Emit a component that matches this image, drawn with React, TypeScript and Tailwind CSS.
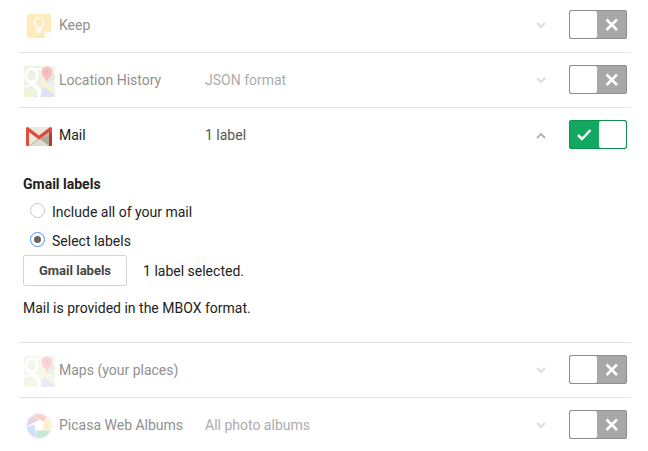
import { ReactNode, useState } from 'react'

function KeepIcon() {
  return (
    <svg width="24" height="24" viewBox="0 0 24 24">
      <path d="M2 0h20a2 2 0 0 1 2 2v15l-7 7H2a2 2 0 0 1-2-2V2a2 2 0 0 1 2-2z" fill="#fbbf24" />
      <path d="M17 24v-7h7z" fill="#fdeeb0" />
      <path d="M17 17v7h-7z" fill="#eaa91c" opacity=".6" />
      <path
        d="M10 14c0-2-2.500-2.800-2.500-5.500a4.600 4.600 0 0 1 9.200 0c0 2.700-2.500 3.500-2.500 5.500zM9 16.300h6M10 18.300h4"
        fill="none"
        stroke="#fff"
        strokeWidth="1.400"
      />
    </svg>
  )
}

function MapsIcon() {
  return (
    <svg width="31" height="31" viewBox="0 0 31 31">
      <defs>
        <clipPath id="map">
          <rect width="31" height="31" rx="2" />
        </clipPath>
      </defs>
      <g clipPath="url(#map)">
        <path d="M0 0h31v31H0z" fill="#c3d8a6" />
        <path d="M16 0h15v17L16 11z" fill="#d0ddb8" />
        <path d="M10 31l11-10 10 6v4z" fill="#8fa0d8" />
        <path d="M17 12l14 8v6l-10-6-5 3z" fill="#cfcfd0" />
        <path d="M3 31l6-6M16 23l5-4 10 9M17 12l4 6" stroke="#f0dc50" strokeWidth="2.500" fill="none" />
        <g fill="none" stroke="#fff">
          <ellipse cx="7.500" cy="9.500" rx="5.800" ry="6.800" strokeWidth="3.200" />
          <path d="M8 3h9" strokeWidth="2.200" />
          <path d="M10 15c-3 3 0 4 3 6.500 3.500 3 2.500 6.500 1 9.500" strokeWidth="4" />
          <path d="M0 20.500c4 0 7-1 10-3" strokeWidth="2" />
        </g>
        <path d="M23 18l4-8 4-2v5z" fill="#666" opacity=".4" />
        <path d="M23 18c0-6-5.500-7-5.500-12a5.500 5.500 0 0 1 11 0c0 5-5.500 6-5.500 12z" fill="#e8302e" />
        <circle cx="23" cy="6" r="1.700" fill="#962020" />
      </g>
    </svg>
  )
}

function MailIcon() {
  return (
    <svg width="26" height="19" viewBox="0 0 26 19">
      <rect width="26" height="19" rx="1.500" fill="#ece9dc" />
      <path d="M13 11l10-7v15z" fill="#b9b6a8" />
      <path d="M3 19l10-8 10 8z" fill="#dfdccd" />
      <path d="M13 11l10 8V9z" fill="#aeab9d" />
      <path d="M3 19l10-7" fill="none" stroke="#b5b2a4" strokeWidth="1" />
      <path d="M0 1.500A1.500 1.500 0 0 1 2.500.4L13 8.500 23.500.4A1.500 1.500 0 0 1 26 1.500V19h-3V5l-10 7.500L3 5v14H1.500A1.500 1.500 0 0 1 0 17.500z" fill="#e04a3f" />
      <path d="M23 5l3 3v9.500a1.500 1.500 0 0 1-1.500 1.500H23z" fill="#b5382e" />
    </svg>
  )
}

function PicasaIcon() {
  return (
    <svg width="28" height="28" viewBox="0 0 28 28">
      <defs>
        <clipPath id="lens">
          <circle cx="14" cy="14" r="12" />
        </clipPath>
      </defs>
      <circle cx="14" cy="14" r="13.500" fill="#e2e2e2" />
      <g clipPath="url(#lens)">
        <path d="M0 0h28v28H0z" fill="#fff" />
        <path d="M7 0h15l-2.500 10L7 4z" fill="#e8483c" />
        <path d="M22 2l-4.500 16H28V4z" fill="#fbc834" />
        <path d="M11 18.500h16V28H12z" fill="#1faa61" />
        <path d="M0 15.500l9.500-3L12 28H0z" fill="#4a87f4" />
        <path d="M0 5l6-1.500 8 4.500-14 7z" fill="#9b4aa8" />
      </g>
    </svg>
  )
}

function Chevron({ up }: { up?: boolean }) {
  return (
    <svg width="10" height="7" viewBox="0 0 10 7" fill="none" strokeWidth="2">
      {up ? (
        <path d="M1 6l4-4 4 4" stroke="#b5b5b5" />
      ) : (
        <path d="M1 1l4 4 4-4" stroke="#dcdcdc" />
      )}
    </svg>
  )
}

function Toggle({ label, initial }: { label: string; initial: boolean }) {
  const [on, setOn] = useState(initial)

  return (
    <label
      className={
        on
          ? 'relative flex h-[29px] w-[58px] cursor-pointer rounded-xs border border-[#0b9150] bg-[#12a85f]'
          : 'relative flex h-[29px] w-[58px] cursor-pointer flex-row-reverse rounded-xs border border-[#8e8e8e] bg-[#a8a8a8]'
      }
    >
      <input
        type="checkbox"
        aria-label={label}
        className="sr-only"
        checked={on}
        onChange={() => setOn(!on)}
      />
      <span className="flex flex-1 items-center justify-center">
        {on ? (
          <svg width="15" height="12" viewBox="0 0 15 12" fill="none">
            <path d="M1 6l4 4 8.500-9" stroke="#fff" strokeWidth="2.500" />
          </svg>
        ) : (
          <svg width="13" height="13" viewBox="0 0 13 13" fill="none">
            <path d="M1.500 1.500l10.500 10.500M12 1.500L1.500 12" stroke="#fff" strokeWidth="2.600" />
          </svg>
        )}
      </span>
      <span className="w-[27px] rounded-xs bg-white" />
    </label>
  )
}

type RowProps = {
  icon: ReactNode
  name: string
  detail?: string
  enabled?: boolean
  faint?: string
}

function Row({ icon, name, detail, enabled = false, faint = 'opacity-30' }: RowProps) {
  return (
    <div className="flex items-center pt-3 pr-1 pb-[13px] pl-1">
      <div className={`-my-2 flex h-8 w-8 items-center justify-center pt-[3px] ${enabled ? '' : faint}`}>
        {icon}
      </div>
      <div className={`ml-1 w-[146px] ${enabled ? 'text-[#222]' : 'text-[#909090]'}`}>{name}</div>
      <div className={`flex-1 ${enabled ? 'text-[#555]' : 'text-[#acacac]'}`}>{detail}</div>
      <button type="button" aria-label={`${name} options`} className="mr-[23px] cursor-pointer pt-[5px] pb-1">
        <Chevron up={enabled} />
      </button>
      <Toggle label={name} initial={enabled} />
    </div>
  )
}

const radioClass =
  'flex size-[15px] appearance-none items-center justify-center rounded-full border border-[#c6c6c6] checked:border-[#4d90fe] checked:before:size-[7px] checked:before:rounded-full checked:before:bg-[#666]'

function MailOptions() {
  const [choice, setChoice] = useState('some')

  return (
    <div className="px-1 pt-3 pb-6 text-[#222]">
      <h4 className="font-bold leading-5">Gmail labels</h4>

      <div className="mt-2 flex items-start gap-[7px] pt-px pl-[7px] leading-[19px]">
        <input
          type="radio"
          name="labels"
          id="all"
          className={radioClass}
          checked={choice === 'all'}
          onChange={() => setChoice('all')}
        />
        <label htmlFor="all">Include all of your mail</label>
      </div>

      <div className="mt-[9px] flex items-start gap-[7px] pt-px pl-[7px] leading-[19px]">
        <input
          type="radio"
          name="labels"
          id="some"
          className={radioClass}
          checked={choice === 'some'}
          onChange={() => setChoice('some')}
        />
        <label htmlFor="some">Select labels</label>
      </div>

      <div className="mt-1 flex items-center gap-4">
        <button
          type="button"
          className="h-[31px] cursor-pointer rounded-xs border border-[#d4d4d4] px-[15px] text-[13px] font-bold text-[#444]"
        >
          Gmail labels
        </button>
        <span>1 label selected.</span>
      </div>

      <p className="mt-3">Mail is provided in the MBOX format.</p>
    </div>
  )
}

export default function App() {
  return (
    <main className="-mt-[2px] bg-white pr-[17px] pl-[19px] font-[Roboto,sans-serif] text-[14px] leading-5">
      <div className="divide-y divide-[#e3e3e3]">
        <Row icon={<KeepIcon />} name="Keep" />
        <Row icon={<MapsIcon />} name="Location History" detail="JSON format" />
        <div>
          <Row icon={<MailIcon />} name="Mail" detail="1 label" enabled />
          <MailOptions />
        </div>
        <Row icon={<MapsIcon />} name="Maps (your places)" faint="opacity-20" />
        <Row icon={<PicasaIcon />} name="Picasa Web Albums" detail="All photo albums" faint="opacity-25" />
      </div>
    </main>
  )
}
